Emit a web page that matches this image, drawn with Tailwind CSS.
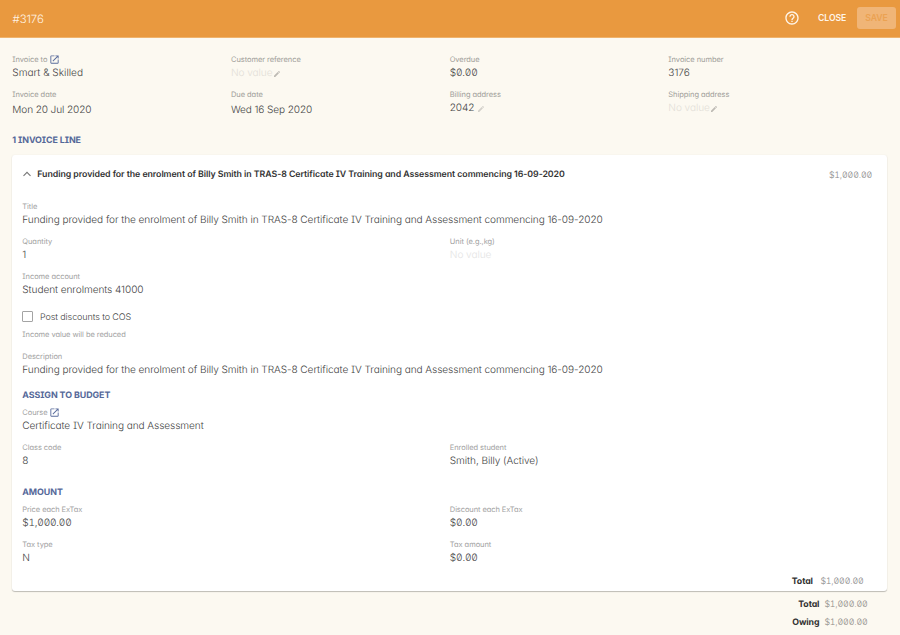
<!DOCTYPE html>
<html lang="en">
<head>
<meta charset="utf-8">
<title>Invoice #3176</title>
<script src="https://cdn.jsdelivr.net/npm/@tailwindcss/browser@4"></script>
</head>
<body class="w-[900px] h-[635px] overflow-hidden bg-[#fcf9f1] font-['Inter','Liberation_Sans',sans-serif] text-[10.100px] font-[350] tracking-[-0.078px] leading-[15px] text-[#444444] [font-feature-settings:'cv11','cv08'] [text-rendering:geometricPrecision]">
<svg class="hidden">
  <symbol id="open" viewBox="0 0 24 24"><path d="M19 19H5V5h7V3H5c-1.11 0-2 .9-2 2v14c0 1.1.89 2 2 2h14c1.1 0 2-.9 2-2v-7h-2v7zM14 3v2h3.59l-9.83 9.83 1.41 1.41L19 6.41V10h2V3h-7z"/></symbol>
  <symbol id="pen" viewBox="0 0 24 24"><path d="M3 17.25V21h3.75L17.81 9.94l-3.75-3.75L3 17.25zM20.71 7.04c.39-.39.39-1.02 0-1.41l-2.34-2.34c-.39-.39-1.02-.39-1.41 0l-1.83 1.83 3.75 3.75 1.83-1.83z"/></symbol>
</svg>
<header class="h-[38px] flex items-center bg-[#e9993f] border-b border-[#efb36d] pl-[12.500px] pr-1 text-white">
  <h1 class="text-[11.400px] leading-4 font-light text-[#fff3e4]">#3176</h1>
  <svg class="ml-auto w-4 h-4 -mt-px fill-[#fff5e9]" viewBox="0 0 24 24"><path d="M11 18h2v-2h-2v2zm1-16C6.480 2 2 6.480 2 12s4.480 10 10 10 10-4.480 10-10S17.520 2 12 2zm0 18c-4.410 0-8-3.590-8-8s3.590-8 8-8 8 3.590 8 8-3.590 8-8 8zm0-14c-2.210 0-4 1.790-4 4h2c0-1.100.9-2 2-2s2 .9 2 2c0 2-3 1.750-3 5h2c0-2.250 3-2.500 3-5 0-2.210-1.790-4-4-4z"/></svg>
  <button class="ml-[18.500px] w-[28px] -mt-px text-left whitespace-nowrap text-[8.700px] font-semibold text-[#fff5e9]">CLOSE</button>
  <button class="ml-[11px] w-[39px] h-[22px] -mt-px rounded-[3px] bg-[#f0b577] text-[8.700px] font-semibold text-[#eba252]">SAVE</button>
</header>
<main>
  <section class="grid grid-cols-[218.700px_218.700px_218.700px_1fr] gap-y-[8.300px] pl-[12.300px] pt-4">
    <div><div class="h-3 flex items-center text-[7.500px] font-normal tracking-[-0.060px] leading-3 text-[#a09e99]">Invoice to<svg class="ml-[2px] w-[11px] h-[11px] -mt-px fill-[#5a6c9c]"><use href="#open"/></svg></div><div class="tracking-normal">Smart &amp; Skilled</div></div>
    <div><div class="h-3 text-[7.500px] font-normal tracking-[-0.060px] leading-3 text-[#a09e99]">Customer reference</div><div class="flex items-center text-[#e3dfd8]">No value<svg class="w-2 h-2 mt-px fill-[#bdbab4]"><use href="#pen"/></svg></div></div>
    <div><div class="h-3 text-[7.500px] font-normal tracking-[-0.060px] leading-3 text-[#a09e99]">Overdue</div><div class="tracking-[-0.150px] [font-feature-settings:'zero','tnum']">$0.00</div></div>
    <div><div class="h-3 text-[7.500px] font-normal tracking-[-0.060px] leading-3 text-[#a09e99]">Invoice number</div><div>3176</div></div>
    <div><div class="h-3 text-[7.500px] font-normal tracking-[-0.060px] leading-3 text-[#a09e99]">Invoice date</div><div class="pt-[1.700px] tracking-[-0.120px]">Mon 20 Jul 2020</div></div>
    <div><div class="h-3 text-[7.500px] font-normal tracking-[-0.060px] leading-3 text-[#a09e99]">Due date</div><div class="pt-[1.700px] tracking-[-0.120px]">Wed 16 Sep 2020</div></div>
    <div><div class="h-3 text-[7.500px] font-normal tracking-[-0.060px] leading-3 text-[#a09e99]">Billing address</div><div class="flex items-center">2042<svg class="ml-[3px] w-2 h-2 mt-px fill-[#d3d0ca]"><use href="#pen"/></svg></div></div>
    <div><div class="h-3 text-[7.500px] font-normal tracking-[-0.060px] leading-3 text-[#a09e99]">Shipping address</div><div class="flex items-center text-[#e3dfd8]">No value<svg class="w-2 h-2 mt-px fill-[#bdbab4]"><use href="#pen"/></svg></div></div>
  </section>
  <h2 class="pl-[12.300px] mt-[15.800px] text-[8.900px] leading-[14px] font-bold text-[#556899]">1 INVOICE LINE</h2>
  <article class="mt-[7px] ml-3 mr-[13px] h-[436.500px] rounded-[3px] bg-white shadow-[0_1px_1px_rgba(0,0,0,0.24),0_0_2px_rgba(0,0,0,0.06)] pl-[10.300px] pt-[13px]">
    <div class="h-[14px] flex items-center pr-[15px]">
      <svg class="w-[10px] h-[10px] -mt-px fill-none stroke-[#777777] stroke-[1.100]" viewBox="0 0 10 10"><path d="M1.500 6.800 5 3.300l3.500 3.500"/></svg>
      <h3 class="ml-[5px] text-[8.800px] font-semibold tracking-[-0.060px] text-[#333333] whitespace-nowrap">Funding provided for the enrolment of Billy Smith in TRAS-8 Certificate IV Training and Assessment commencing 16-09-2020</h3>
      <span class="ml-auto mt-px text-[8.800px] tracking-[-0.150px] text-[#888888] [font-feature-settings:'zero','tnum']">$1,000.00</span>
    </div>
    <div class="mt-[19px] grid grid-cols-[427.500px_1fr] gap-y-[8.300px]">
      <div class="col-span-2"><div class="h-3 text-[7.500px] font-normal tracking-[-0.060px] leading-3 text-[#a2a2a2]">Title</div><div>Funding provided for the enrolment of Billy Smith in TRAS-8 Certificate IV Training and Assessment commencing 16-09-2020</div></div>
      <div><div class="h-3 text-[7.500px] font-normal tracking-[-0.060px] leading-3 text-[#a2a2a2]">Quantity</div><div>1</div></div>
      <div><div class="h-3 text-[7.500px] font-normal tracking-[-0.060px] leading-3 text-[#a2a2a2]">Unit (e.g.,kg)</div><div class="text-[#e4e4e4]">No value</div></div>
      <div class="col-span-2"><div class="h-3 text-[7.500px] font-normal tracking-[-0.060px] leading-3 text-[#a2a2a2]">Income account</div><div>Student enrolments 41000</div></div>
    </div>
    <div class="mt-[11px] h-[15px] flex items-center"><span class="w-[11px] h-[11px] rounded-[1px] border border-[#a4a4a4]"></span><span class="ml-[6.700px] mt-px text-[9px] tracking-[-0.100px]">Post discounts to COS</span></div>
    <div class="mt-[4.200px] text-[7.500px] font-normal tracking-[-0.060px] leading-3 text-[#a2a2a2]">Income value will be reduced</div>
    <div class="mt-[10.300px]"><div class="h-3 text-[7.500px] font-normal tracking-[-0.060px] leading-3 text-[#a2a2a2]">Description</div><div>Funding provided for the enrolment of Billy Smith in TRAS-8 Certificate IV Training and Assessment commencing 16-09-2020</div></div>
    <h2 class="mt-[11px] text-[8.900px] leading-[14px] font-bold text-[#556899]">ASSIGN TO BUDGET</h2>
    <div class="mt-[3.900px] grid grid-cols-[427.500px_1fr] gap-y-[8.300px]">
      <div class="col-span-2"><div class="h-3 flex items-center text-[7.500px] font-normal tracking-[-0.060px] leading-3 text-[#a2a2a2]">Course<svg class="ml-px w-[11px] h-[11px] fill-[#5a6c9c]"><use href="#open"/></svg></div><div>Certificate IV Training and Assessment</div></div>
      <div><div class="h-3 text-[7.500px] font-normal tracking-[-0.060px] leading-3 text-[#a2a2a2]">Class code</div><div>8</div></div>
      <div><div class="h-3 text-[7.500px] font-normal tracking-[-0.060px] leading-3 text-[#a2a2a2]">Enrolled student</div><div>Smith, Billy (Active)</div></div>
    </div>
    <h2 class="mt-[17px] text-[8.900px] leading-[14px] font-bold text-[#556899]">AMOUNT</h2>
    <div class="mt-[3.500px] grid grid-cols-[427.500px_1fr] gap-y-[8.300px]">
      <div><div class="h-3 text-[7.500px] font-normal tracking-[-0.080px] leading-3 text-[#a2a2a2]">Price each ExTax</div><div class="tracking-[-0.200px] [font-feature-settings:'zero','tnum']">$1,000.00</div></div>
      <div><div class="h-3 text-[7.500px] font-normal tracking-[-0.080px] leading-3 text-[#a2a2a2]">Discount each ExTax</div><div class="tracking-[-0.150px] [font-feature-settings:'zero','tnum']">$0.00</div></div>
      <div><div class="h-3 text-[7.500px] font-normal tracking-[-0.060px] leading-3 text-[#a2a2a2]">Tax type</div><div>N</div></div>
      <div><div class="h-3 text-[7.500px] font-normal tracking-[-0.060px] leading-3 text-[#a2a2a2]">Tax amount</div><div class="tracking-[-0.150px] [font-feature-settings:'zero','tnum']">$0.00</div></div>
    </div>
    <div class="mt-[8.500px] pr-[23.500px] flex justify-end gap-[7.500px] text-[8.800px] tracking-[-0.100px]"><b class="font-bold text-[#333333]">Total</b><span class="tracking-[-0.150px] text-[#888888] [font-feature-settings:'zero','tnum']">$1,000.00</span></div>
  </article>
  <div class="mt-[6px] pr-[32.500px] flex flex-col gap-[3px] text-[8.800px] tracking-[-0.100px]">
    <div class="flex justify-end gap-[5px]"><b class="font-bold text-[#333333]">Total</b><span class="tracking-[-0.150px] text-[#8c8a86] [font-feature-settings:'zero','tnum']">$1,000.00</span></div>
    <div class="flex justify-end gap-[5px]"><b class="font-bold text-[#333333]">Owing</b><span class="tracking-[-0.150px] text-[#8c8a86] [font-feature-settings:'zero','tnum']">$1,000.00</span></div>
  </div>
</main>
</body>
</html>
